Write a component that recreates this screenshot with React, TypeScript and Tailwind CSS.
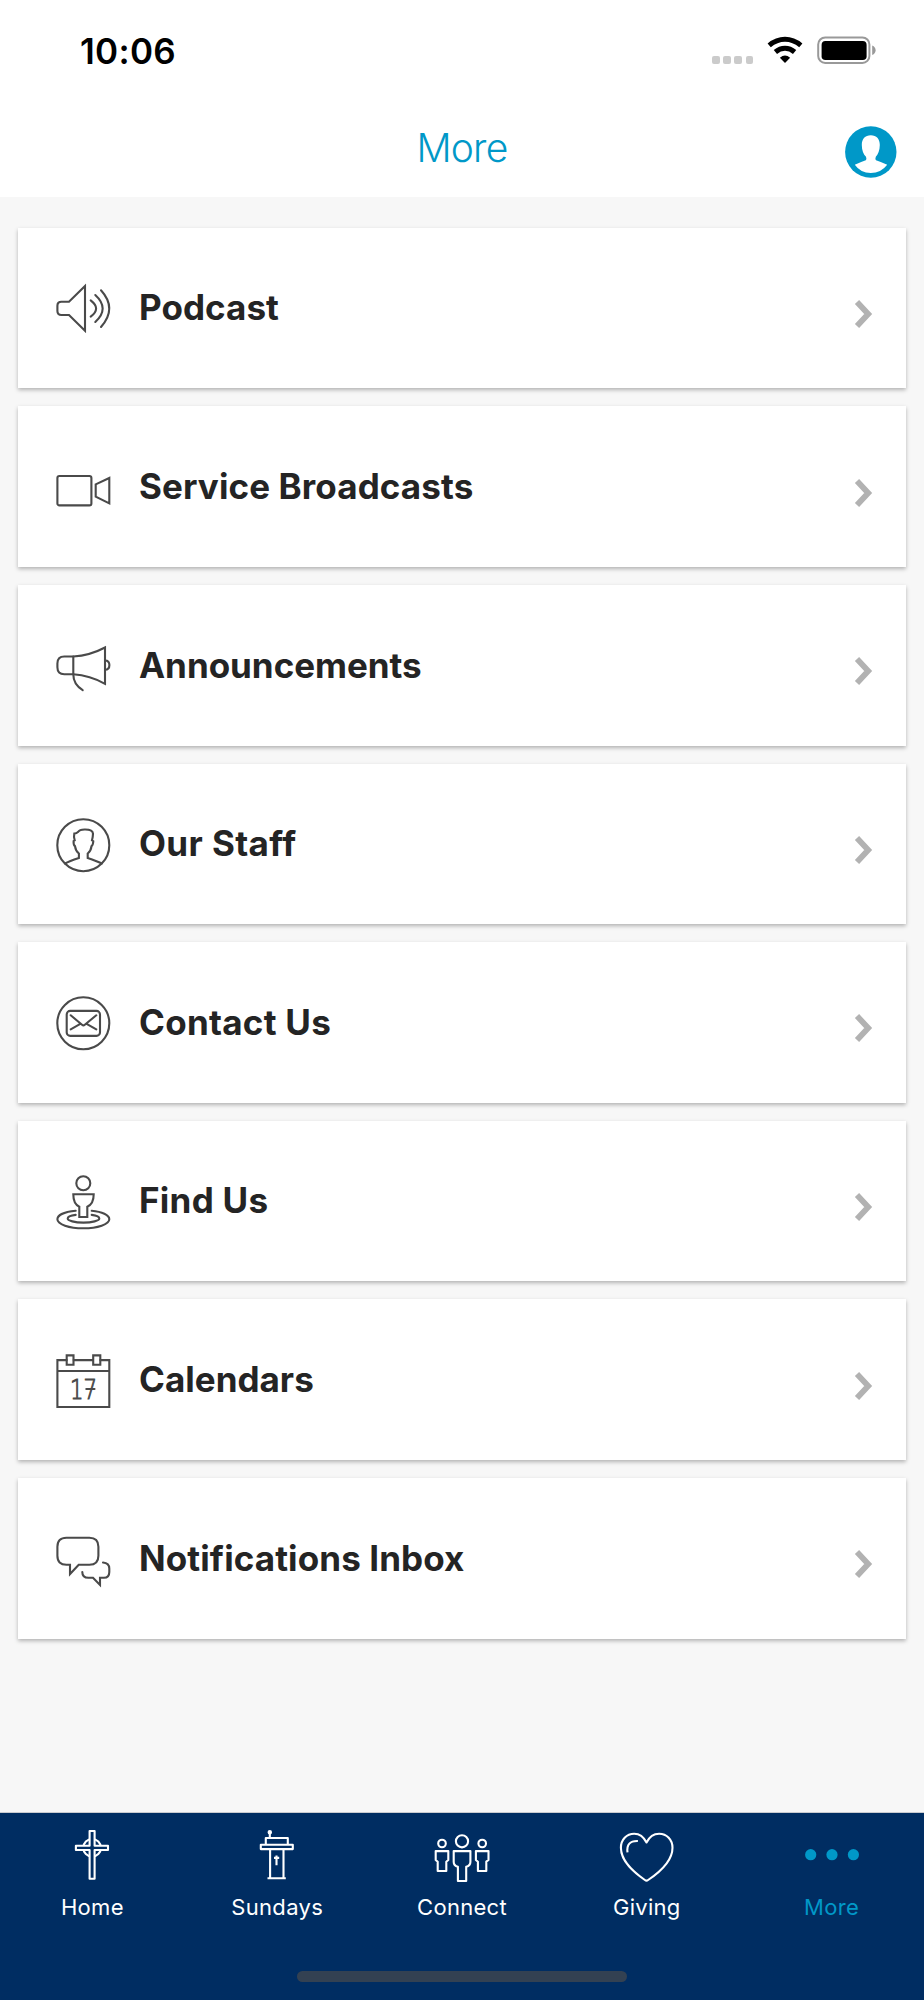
import React from 'react'

type MenuItemType = {
  label: string
  spacing: string
  icon: React.ReactNode
}

type TabType = {
  label: string
  active?: boolean
  icon: React.ReactNode
}

const menuItems: Array<MenuItemType> = [
  {
    label: 'Podcast',
    spacing: 'tracking-[0.05px]',
    icon: (
      <>
        <path d="M29 3V47.7L13 32H5.4Q1.4 32 1.4 28V22.7Q1.4 18.7 5.4 18.7H13Z" />
        <path d="M34.7 17.3Q45.5 25.5 34.7 33.7M39.3 12Q54 25.5 39.3 39M45 7.3Q61.5 25.5 45 44" />
      </>
    )
  },
  {
    label: 'Service Broadcasts',
    spacing: 'tracking-[0.1px]',
    icon: (
      <>
        <rect x="1.4" y="14" width="34" height="29.4" rx="2" />
        <path d="M39.7 22.4L53.3 16V41.4L39.7 34.7Z" />
      </>
    )
  },
  {
    label: 'Announcements',
    spacing: 'tracking-[-0.02px]',
    icon: (
      <>
        <path d="M8.3 16.5H17.3Q34 15.5 49 7.5V43.8Q34 35.5 17.3 34.3H8.3Q1.4 34.3 1.4 27.3V23.5Q1.4 16.5 8.3 16.5Z" />
        <path d="M17.3 16.5V34.3Q17.3 44.5 26.7 50.1M49 20.5Q53.4 20.5 53.4 25.1Q53.4 29.8 49 29.8" />
      </>
    )
  },
  {
    label: 'Our Staff',
    spacing: 'tracking-[0.4px]',
    icon: (
      <>
        <circle cx="27.3" cy="26.2" r="26" />
        <path d="M9 44.5Q13 42 22.9 38.9V34.5Q19.6 32 19 27.2Q17.3 26 17.6 22L18.7 21.3Q17.6 17.5 18.3 14.6Q20.5 14.4 22 13Q23.5 10.6 28.5 10.5Q36.6 10.3 37 14.6Q36.9 18 36 21.3L37.3 22.2Q37 26.4 35.5 27.2Q35 32 31.7 34.5V38.9Q41 42 45.7 44.5" />
      </>
    )
  },
  {
    label: 'Contact Us',
    spacing: 'tracking-[0.27px]',
    icon: (
      <>
        <circle cx="27.3" cy="26.3" r="26" />
        <rect x="10.7" y="13.9" width="33.3" height="25" rx="3.5" />
        <path d="M14.7 18.3L26 27.8Q27.4 29 28.8 27.8L40.3 18.3M14.7 32.3L24.3 26.8M40.3 32.3L30.6 26.8" />
      </>
    )
  },
  {
    label: 'Find Us',
    spacing: 'tracking-[0.27px]',
    icon: (
      <>
        <circle cx="27.3" cy="7.3" r="7" />
        <path d="M17.3 18.3H37.7Q37.7 28 31.3 30.7V41H23.3V30.7Q17.3 28 17.3 18.3Z" />
        <path d="M19.7 34.8C9 35.8 1.4 39 1.4 43.3C1.4 48.3 13 52.3 27.3 52.3S53.3 48.3 53.3 43.3C53.3 39 46 35.8 35.7 34.8" />
        <path d="M19.7 38.9C15 39.5 11.7 40.8 11.7 42.5C11.7 44.7 18.7 46.6 27.4 46.6S43.3 44.7 43.3 42.5C43.3 40.8 40 39.5 35.7 38.9" />
      </>
    )
  },
  {
    label: 'Calendars',
    spacing: 'tracking-[0.02px]',
    icon: (
      <>
        <path d="M10.7 5.1H1.4V52H53.3V5.1H44.3M37 5.1H17.7M1.4 16H53.3" />
        <path d="M10.7 .4H17.5V9.7H10.7ZM37.2 .4H44.3V9.7H37.2Z" />
        <text
          x="14"
          y="43.6"
          textLength="27"
          lengthAdjust="spacingAndGlyphs"
          fill="#4a4a4a"
          strokeWidth="1"
          className="font-['DejaVu_Sans',sans-serif] text-[27px] font-extralight"
        >
          17
        </text>
        <path d="M30.3 34H38.5" />
      </>
    )
  },
  {
    label: 'Notifications Inbox',
    spacing: 'tracking-[0.1px]',
    icon: (
      <>
        <path d="M10.4 4.8H33.4Q42.4 4.8 42.4 13.8V22.8Q42.4 31.8 33.4 31.8H22.7L14 41V31.8H10.4Q1.4 31.8 1.4 22.8V13.8Q1.4 4.8 10.4 4.8Z" />
        <path d="M47 29.5Q53.3 30 53.3 35.5V39Q53.3 44.8 48 44.8H44V52L37 44.8H32.3Q26.3 44.8 26.3 39" />
      </>
    )
  }
]

const tabs: Array<TabType> = [
  {
    label: 'Home',
    icon: (
      <>
        <circle cx="28.1" cy="20.8" r="8.8" />
        <path
          fill="#002d62"
          d="M25.6 4H30.6V18.7H44V23H30.6V51.7H25.6V23H11.9V18.7H25.6Z"
        />
      </>
    )
  },
  {
    label: 'Sundays',
    icon: (
      <>
        <circle cx="20.8" cy="5.3" r="1.2" />
        <path d="M20.8 5.3V11M16.8 17.7V11H38.8V17.7M21.1 22V51.3M34.5 22V51.3M18.5 51.3H36.8M27.5 28.6V38.2M25 30.9H30.2" />
        <rect x="11.8" y="17.7" width="32" height="4.4" />
      </>
    )
  },
  {
    label: 'Connect',
    icon: (
      <>
        <circle cx="28" cy="14.3" r="6.1" />
        <circle cx="8" cy="16.5" r="3.8" />
        <circle cx="48.2" cy="16.5" r="3.8" />
        <path d="M19.7 24.1H36.4V35Q36.4 38.7 32.2 39.7V54H23.9V39.7Q19.7 38.7 19.7 35Z" />
        <path d="M1.7 24.1H14.3V33L12.3 34.7V44H3.7V34.7L1.7 33ZM41.9 24.1H54.5V33L52.3 34.7V44H43.9V34.7L41.9 33Z" />
      </>
    )
  },
  {
    label: 'Giving',
    icon: (
      <>
        <path d="M27.5 15.5C24.5 9.5 20 6.7 15.2 6.7C7.5 6.7 1.9 12.7 1.9 20.7C1.9 35 16 46 25.9 53Q27.5 54.2 29.1 53C39.5 46 53.5 35 53.5 20.7C53.5 12.7 47.8 6.7 40.1 6.7C35 6.7 30.5 9.5 27.5 15.5Z" />
        <path d="M8.5 25.3C7.5 17.5 11 13.7 18.9 14" />
      </>
    )
  },
  {
    label: 'More',
    active: true,
    icon: (
      <g fill="currentColor" stroke="none">
        <circle cx="6.7" cy="27.7" r="5.6" />
        <circle cx="28" cy="27.7" r="5.6" />
        <circle cx="49.4" cy="27.7" r="5.6" />
      </g>
    )
  }
]

const StatusBar = () => (
  <div className="flex h-[100px] items-start justify-between pl-[80px] pr-[47px] pt-[30px] text-black">
    <p className="text-[35px] font-semibold leading-[42px] tracking-[0.3px]">
      10:06
    </p>
    <div className="mt-[6px] flex h-[28px]">
      <div className="mt-[20px] flex gap-[3.6px]">
        <span className="h-[7.5px] w-[7.5px] rounded-[2px] bg-[#cbcbcb]" />
        <span className="h-[7.5px] w-[7.5px] rounded-[2px] bg-[#cbcbcb]" />
        <span className="h-[7.5px] w-[7.5px] rounded-[2px] bg-[#cbcbcb]" />
        <span className="h-[7.5px] w-[7.5px] rounded-[2px] bg-[#cbcbcb]" />
      </div>
      <svg
        className="ml-[14px] h-[28px] w-[36px]"
        viewBox="0 0 36 28"
        fill="none"
        stroke="black"
        strokeWidth="5"
      >
        <path d="M2.2 9.4Q9.5 3.3 18 3.3T33.8 9.4" />
        <path d="M8.4 16Q12.7 12.3 18 12.3T27.6 16" />
        <path
          d="M12.9 21.8Q18 17.2 23.1 21.8L18.5 26.6Q18 27.1 17.5 26.6Z"
          fill="black"
          stroke="none"
        />
      </svg>
      <svg className="ml-[14px] h-[28px] w-[60px]" viewBox="0 0 60 28">
        <rect
          x="1.2"
          y="1.5"
          width="51.2"
          height="25.4"
          rx="7"
          fill="none"
          stroke="#999"
          strokeWidth="2"
        />
        <rect x="4.6" y="5.1" width="45" height="19" rx="3.8" />
        <path d="M55.2 9.5Q58.6 11 58.6 14.2T55.2 19Z" fill="#999" />
      </svg>
    </div>
  </div>
)

const Header = () => (
  <div className="grid h-[97px] grid-cols-[1fr_auto_1fr] items-start text-[#0098c8]">
    <div />
    <h1 className="mt-[24px] text-[39px] font-light leading-[48px] tracking-[-0.8px]">
      More
    </h1>
    <svg
      className="mr-[27.5px] mt-[25.7px] h-[52px] w-[52px] justify-self-end"
      viewBox="0 0 52 52"
    >
      <circle cx="25.8" cy="26" r="25.7" fill="currentColor" />
      <path
        fill="white"
        d="M25.8 9.3C31.5 9.3 34.8 13 34.8 19C34.8 24.5 33 28.3 30.8 30.7Q29.9 33 31 34.3Q37 36.4 42.2 38.7Q36 47 25.8 47T9.8 38.7Q15 36.4 20.8 34.3Q21.9 33 21 30.7C18.5 28.3 16.8 24.5 16.8 19C16.8 13 20.1 9.3 25.8 9.3Z"
      />
    </svg>
  </div>
)

const MenuCard = (props: { item: MenuItemType }) => (
  <div className="flex h-[160.6px] shrink-0 items-start bg-white pl-[38px] pr-[32px] shadow-[0_2px_4px_rgba(0,0,0,0.28)]">
    <svg
      className="mt-[55.2px] h-[55px] w-[55px] shrink-0 overflow-visible"
      viewBox="0 0 55 55"
      fill="none"
      stroke="#4a4a4a"
      strokeWidth="2.1"
      strokeLinecap="round"
    >
      {props.item.icon}
    </svg>
    <p
      className={`ml-[28px] mt-[58.6px] grow text-[35px] font-bold leading-[42px] text-[#242424] ${props.item.spacing}`}
    >
      {props.item.label}
    </p>
    <svg
      className="mt-[71.2px] h-[30px] w-[20px]"
      viewBox="0 0 20 30"
      fill="none"
      stroke="#b2b2b2"
      strokeWidth="5.8"
    >
      <path d="M3 3L14.2 15L3 27" />
    </svg>
  </div>
)

const TabBar = () => (
  <div className="flex h-[188px] flex-col items-center border-t border-[#c9cbd0] bg-[#002d62]">
    <div className="flex w-full pt-[14px]">
      {tabs.map((tab) => (
        <div
          key={tab.label}
          className={`flex flex-1 flex-col items-center ${tab.active ? 'text-[#0098c8]' : 'text-white'}`}
        >
          <svg
            className="h-[56px] w-[56px]"
            viewBox="0 0 56 56"
            fill="none"
            stroke="currentColor"
            strokeWidth="2.1"
            strokeLinejoin="round"
          >
            {tab.icon}
          </svg>
          <p className="mt-[10px] text-[22px] leading-[28px] tracking-[0.3px]">
            {tab.label}
          </p>
        </div>
      ))}
    </div>
    <div className="mb-[18px] mt-auto h-[11px] w-[330px] rounded-full bg-[#334152]" />
  </div>
)

export default function App() {
  return (
    <div className="flex h-[2000px] w-[924px] flex-col overflow-hidden bg-white font-['Inter',sans-serif]">
      <StatusBar />
      <Header />
      <div className="flex grow flex-col gap-[18px] bg-[#f7f7f7] px-[18px] pt-[30.8px]">
        {menuItems.map((item) => (
          <MenuCard key={item.label} item={item} />
        ))}
      </div>
      <TabBar />
    </div>
  )
}
